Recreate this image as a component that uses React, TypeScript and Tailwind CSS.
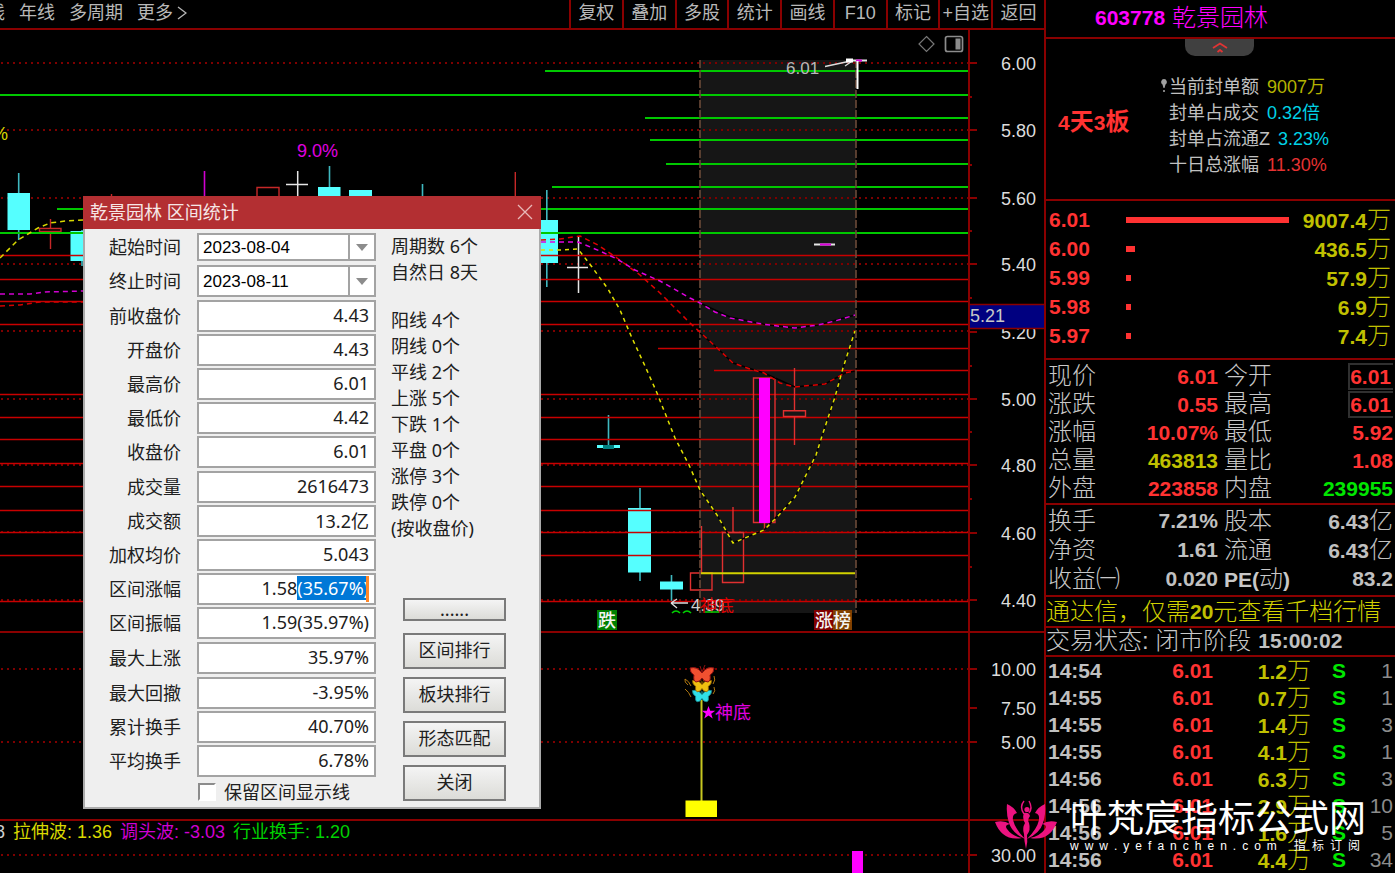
import { useEffect, useRef } from "react";
import type { ReactNode } from "react";

const LATIN_CJK = "font-['Liberation_Sans','Noto_Sans_CJK_SC',sans-serif]";
const DIALOG_FONT = "font-['Noto_Sans','Noto_Sans_CJK_SC',sans-serif]";

const tools = ["复权", "叠加", "多股", "统计", "画线", "F10", "标记", "+自选", "返回"];
const periods = ["线", "年线", "多周期", "更多"];

const dotted = [63, 130, 198, 264, 331, 399, 465, 532, 600];
const greenLines = [
  [545, 70], [0, 94], [645, 117], [650, 139], [666, 163], [552, 186], [57, 208], [0, 232],
];
const redLines = [
  [0, 255], [0, 279], [0, 301], [0, 324], [658, 348], [714, 370], [0, 394], [0, 417],
  [0, 439], [0, 463], [0, 486], [0, 510], [0, 532], [0, 555], [0, 601],
];

function Grid({ ys }: { ys: number[] }) {
  return (
    <g stroke="#7d0000" strokeWidth="2" strokeDasharray="2 4">
      {ys.map((y) => <line key={y} x1="1" x2="968" y1={y} y2={y} />)}
    </g>
  );
}

function MainChart() {
  return (
    <svg viewBox="0 30 968 601" preserveAspectRatio="xMaxYMin slice" className="block h-[601px] w-full min-w-0 flex-1" role="img" aria-label="K线图">
      <rect x="700" y="60" width="156" height="553" fill="#161616" />
      <Grid ys={dotted} />
      <g stroke="#00c800" strokeWidth="2">
        {greenLines.map(([x, y]) => <line key={y} x1={x} x2="968" y1={y + 1} y2={y + 1} />)}
      </g>

      <g fill="none" strokeWidth="1.4" stroke="#c62828">
        <path d="M257 200V187.500H279V200M515.300 172V200M111.500 194V200M39.500 228.500H61V231.500H39.500ZM50.500 219V228M50.500 232V249" />
      </g>
      <g stroke="#3fb8c0" strokeWidth="1.6">
        <path d="M18.700 173V240M82 230V266M329.500 166V190M422.500 184V200M546.800 190V287M608.500 415V446M640 488V581M671.500 575V602" />
      </g>
      <g fill="#55ffff">
        <rect x="7.500" y="193" width="22.500" height="37" />
        <rect x="70.500" y="231" width="22.500" height="30" />
        <rect x="318" y="187" width="22.500" height="20" />
        <rect x="349" y="190" width="23" height="20" />
        <rect x="535" y="220" width="23" height="43" />
        <rect x="597" y="445" width="23" height="3" />
        <rect x="628" y="508" width="23" height="64.500" />
        <rect x="660" y="581.500" width="23" height="8" />
      </g>
      <rect x="603" y="445" width="11" height="4" fill="#008080" />
      <path d="M204.500 171V200" stroke="#d000d0" strokeWidth="1.6" />
      <path d="M297.700 171V200M286 184.500H308M578.500 236V293M567 267.500H588" stroke="#e6e6e6" strokeWidth="1.5" fill="none" />

      <g stroke="#c80000" strokeWidth="1.7">
        {redLines.map(([x, y]) => <line key={y} x1={x} x2="968" y1={y + 0.5} y2={y + 0.5} />)}
      </g>
      <path d="M0 233H968" stroke="#00c800" strokeWidth="2" />

      <g fill="none" stroke="#e03030" strokeWidth="1.4">
        <path d="M690.500 573H712V590H690.500ZM701.500 526V573M722.500 532.500H743.500V582.500H722.500ZM733 507V532" />
        <path d="M753.500 378H775V522.500H753.500ZM764.500 522V531M783.500 410.700H805.500V416.500H783.500ZM794.500 368V410M794.500 417V445" />
      </g>
      <rect x="759" y="378" width="11" height="145" fill="#ff00ff" />
      <path d="M701 573.300H855" stroke="#d2d200" strokeWidth="2" />
      <path d="M700 60V613M856 60V613" stroke="#6b4a38" strokeWidth="1.6" strokeDasharray="8 2" />

      <g fill="none" strokeWidth="1.5">
        <path d="M700 303L730 317 765 324.500 795 328 818 325 855 315M700 333L715 346 733 363 764 373 795 387 825 384 845 373 855 371M700 490L717 515 733 543 764 530 795 497 816 455 823 433 835 397 843 368 855 331" stroke="#000" />
        <path d="M0 258L18 240 38 228 50 223 65 221 83 220" stroke="#d8d800" strokeDasharray="5 4" />
        <path d="M0 294H30L45 292 83 291" stroke="#d000d0" strokeDasharray="5 4" />
        <path d="M0 306L20 305 40 302H83" stroke="#d00000" strokeDasharray="5 4" />
        <path d="M541 240L560 239 580 236 598 245 617 258 640 275 660 293 690 323 715 346 733 363 750 369 764 373 780 383 795 387 825 384 845 373 855 371" stroke="#e00000" strokeDasharray="5 4" />
        <path d="M541 242H578L600 251 617 259 635 270 660 281 690 298 700 303 715 312 730 318 765 324.500 795 328 818 325 835 321 855 315" stroke="#e000e0" strokeDasharray="5 4" />
        <path d="M541 250H560L578 249 592 267 608 289 620 310 632 338 645 366 657 393 675 438 689 465 700 490 717 515 733 543 764 530 778 516 795 497 816 455 823 433 835 397 843 368 855 331" stroke="#e0e000" strokeDasharray="4 4" />
      </g>

      <g strokeWidth="2" fill="none">
        <path d="M814 244.500H835M850 60.500H867" stroke="#e6e6e6" />
        <path d="M820 244.500H831M856 60.500H862" stroke="#e000e0" />
        <path d="M857.500 61V89" stroke="#fff" />
        <path d="M825 66.500L853 60.500M845 66L853 60.500M671 603H688M671 603L677 599M671 603L677 608" stroke="#ddd" strokeWidth="1.3" />
        <path d="M846 60.500H853" stroke="#fff" strokeWidth="4" />
      </g>

      <g className={LATIN_CJK} fontSize="18">
        <text x="-8" y="140" fill="#d8d800">%</text>
        <text x="297" y="157" fill="#e000e0">9.0%</text>
        <text x="786" y="74" fill="#b8b8b8" fontSize="17">6.01</text>
        <text x="691" y="611" fill="#d0d0d0" fontSize="17">4.39</text>
        <text x="700" y="612" fill="#ff0000" fontSize="17" opacity="0.85">神底</text>
      </g>
      <rect x="672" y="613" width="70" height="6" fill="#000" />
      <path d="M672 613q4-4 8 0M683 613q4-4 8 0M705 612h14" stroke="#00d000" strokeWidth="1.6" fill="none" />

      <rect x="597" y="610" width="20" height="20" fill="#008000" />
      <rect x="814" y="610" width="19" height="20" fill="#800000" />
      <rect x="833" y="610" width="19" height="20" fill="#804000" />
      <g className={LATIN_CJK} fontSize="18" fontWeight="500" fill="#f4f4f4">
        <text x="598" y="627">跌</text>
        <text x="815" y="627">涨榜</text>
      </g>

      <path d="M926.500 36.500L934 44 926.500 51.500 919 44Z" fill="none" stroke="#777" strokeWidth="1.2" />
      <rect x="945.500" y="36.500" width="17" height="15" rx="2" fill="none" stroke="#8c8c8c" strokeWidth="1.7" />
      <rect x="955.500" y="38.500" width="5" height="11" fill="#8c8c8c" />
    </svg>
  );
}

function Butterfly({ y, size, fill, edge }: { y: number; size: number; fill: string; edge: string }) {
  return (
    <path
      transform={`translate(702 ${y}) scale(${size})`}
      d="M0-3Q-5-10-12-8Q-12-3-8-1Q-9 5-6 6Q-2 6 0 2Q2 6 6 6Q9 5 8-1Q12-3 12-8Q5-10 0-3ZM0-4L3-11M0-4L-2-10"
      fill={fill}
      stroke={edge}
      strokeWidth="1"
    />
  );
}

function SubChart() {
  return (
    <svg viewBox="0 633 968 186" preserveAspectRatio="xMaxYMin slice" className="block h-[186px] w-full min-w-0 flex-1" role="img" aria-label="神底指标">
      <Grid ys={[669, 742]} />
      <path d="M701.500 700V802" stroke="#c8c820" strokeWidth="2" />
      <rect x="685.500" y="800.500" width="31.500" height="16.500" fill="#ffff00" />
      <Butterfly y={697} size={0.8} fill="#30e0e8" edge="#18888c" />
      <Butterfly y={687} size={0.8} fill="#f0c010" edge="#8a5a00" />
      <path d="M691 686q-2-5-6-7q-1 3 3 6M713 684q3-4 1-8M691 697q-2-5-6-8M713 694q3-3 1-7" fill="none" stroke="#b07810" strokeWidth="1" />
      <Butterfly y={676} size={1} fill="#f05030" edge="#901010" />
      <path d="M708.500 706l1.700 4.700h5l-4 3 1.500 4.800-4.200-2.900-4.200 2.900 1.500-4.800-4-3h5z" fill="#ff00ff" />
      <text x="715" y="719" fontSize="18" fill="#e000e0" className={LATIN_CJK}>神底</text>
    </svg>
  );
}

function Axis({ top, height, labels, minors, className, children }: {
  top: number; height: number; labels: [number, string][]; minors: number[]; className: string; children?: ReactNode;
}) {
  return (
    <svg viewBox={`970 ${top} 74 ${height}`} className={`block w-[76px] shrink-0 border-l-2 border-[#8a0000] ${className}`}>
      {labels.map(([y, text]) => (
        <g key={text}>
          <path d={`M970 ${y}H977`} stroke="#8a0000" strokeWidth="2" />
          <text x="1036" y={y + 7} textAnchor="end" fontSize="18" fill="#dcdcdc" className={LATIN_CJK}>{text}</text>
        </g>
      ))}
      {minors.map((y) => <path key={y} d={`M970 ${y}H972`} stroke="#8a0000" strokeWidth="2" />)}
      {children}
    </svg>
  );
}

const priceLabels: [number, string][] = [
  [63, "6.00"], [130, "5.80"], [198, "5.60"], [264, "5.40"], [332, "5.20"], [399, "5.00"],
  [465, "4.80"], [533, "4.60"], [600, "4.40"],
];

const depth = [
  { price: "6.01", w: 163, vol: "9007.4" },
  { price: "6.00", w: 9, vol: "436.5" },
  { price: "5.99", w: 5, vol: "57.9" },
  { price: "5.98", w: 5, vol: "6.9" },
  { price: "5.97", w: 5, vol: "7.4" },
];

const red = "text-[#ff3232]";
const grey = "text-[#c0c0c0]";
const quotes = [
  ["现价", "6.01", red, "今开", "6.01", red, "box"],
  ["涨跌", "0.55", red, "最高", "6.01", red, "box"],
  ["涨幅", "10.07%", red, "最低", "5.92", red, ""],
  ["总量", "463813", "text-[#c0c000]", "量比", "1.08", red, ""],
  ["外盘", "223858", red, "内盘", "239955", "text-[#00e600]", ""],
];
const basics = [
  ["换手", "7.21%", grey, "股本", "6.43亿", grey, ""],
  ["净资", "1.61", grey, "流通", "6.43亿", grey, ""],
  ["收益㈠", "0.020", grey, "PE(动)", "83.2", grey, ""],
];

const ticks = [
  ["14:54", "1.2", "1"], ["14:55", "0.7", "1"], ["14:55", "1.4", "3"], ["14:55", "4.1", "1"],
  ["14:56", "6.3", "3"], ["14:56", "2.9", "10"], ["14:56", "1.6", "5"], ["14:56", "4.4", "34"],
];

/* Bold figures followed by a unit in the lighter, larger CJK face. */
function Figure({ text }: { text: string }) {
  const unit = /[万亿]$/.test(text) ? text.slice(-1) : "";
  return (
    <>
      <span className="font-bold">{unit ? text.slice(0, -1) : text}</span>
      {unit && <span className="text-[24px] font-light">{unit}</span>}
    </>
  );
}

function QuoteTable({ rows, rowClass }: { rows: string[][]; rowClass: string }) {
  return (
    <table className="w-full table-fixed border-collapse text-[21px] leading-none">
      <colgroup>
        <col className="w-[80px]" />
        <col className="w-[90px]" />
        <col className="w-[72px]" />
        <col />
      </colgroup>
      <tbody>
        {rows.map((r) => (
          <tr key={r[0]} className={rowClass}>
            <th scope="row" className="whitespace-nowrap p-0 text-left text-[24px] font-light text-[#c8c8c8]">{r[0]}</th>
            <td className={`whitespace-nowrap p-0 text-right ${r[2]}`}><Figure text={r[1]} /></td>
            <th scope="row" className="whitespace-nowrap p-0 pl-[6px] text-left text-[24px] font-light text-[#c8c8c8]">
              {r[3].startsWith("PE")
                ? <><span className="text-[21px] font-bold">PE(</span>动<span className="text-[21px] font-bold">)</span></>
                : r[3]}
            </th>
            <td className={`whitespace-nowrap p-0 text-right ${r[5]}`}>
              {r[6] ? <span className="inline-block border-2 border-r-0 border-[#303030] py-[1px] pr-[2px]"><Figure text={r[4]} /></span> : <Figure text={r[4]} />}
            </td>
          </tr>
        ))}
      </tbody>
    </table>
  );
}

function QuotePanel() {
  return (
    <aside className="h-[873px] w-[351px] shrink-0 overflow-hidden border-l-2 border-[#8a0000]">
      <h1 className="flex h-[39px] items-center gap-[7px] border-b-2 border-[#8a0000] pb-[2px] pl-[49px] text-[#ff00ff]">
        <span className="text-[21px] font-bold">603778</span>
        <span className="text-[24px] font-light">乾景园林</span>
      </h1>
      <section className="h-[162px] border-b-2 border-[#8a0000]">
        <button aria-label="收起" className="ml-[139px] flex h-[17px] w-[69px] items-center justify-center rounded-b-[10px] bg-[#404040]">
          <svg width="16" height="12" viewBox="0 0 16 12" fill="none" stroke="#e03434" strokeWidth="1.8">
            <path d="M1 6L8 1.500 15 6M5.500 10L8 8 10.500 10" />
          </svg>
        </button>
        <div className="flex items-center pl-[12px] pt-[18px]">
          <strong className={`w-[103px] pb-[8px] text-[24px] font-bold leading-none ${red}`}><span className="text-[21px]">4</span>天<span className="text-[21px]">3</span>板</strong>
          <svg width="6" height="15" viewBox="0 0 6 15" className="mb-[80px] mr-[2px]" fill="#a0a0a0">
            <path d="M3 0a3 3 0 0 1 1.500 5.500L3.500 9h-1L1.500 5.500A3 3 0 0 1 3 0zM2.200 11h1.600v2H2.200z" />
          </svg>
          <dl className="text-[18px] leading-[26px] text-[#c0c0c0]">
            <div className="flex gap-[8px]"><dt>当前封单额</dt><dd className="text-[#b4b400]">9007万</dd></div>
            <div className="flex gap-[8px]"><dt>封单占成交</dt><dd className="text-[#00d2e6]">0.32倍</dd></div>
            <div className="flex gap-[8px]"><dt>封单占流通Z</dt><dd className="text-[#00d2e6]">3.23%</dd></div>
            <div className="flex gap-[8px]"><dt>十日总涨幅</dt><dd className="text-[#e63232]">11.30%</dd></div>
          </dl>
        </div>
      </section>
      <table className="block border-b-2 border-[#8a0000] pb-[8px] pt-[4px] text-[21px] leading-none">
        <tbody className="block">
          {depth.map((d) => (
            <tr key={d.price} className="flex h-[29px] items-center pl-[3px] pr-[4px]">
              <td className={`w-[77px] font-bold ${red}`}>{d.price}</td>
              <td className="flex-1"><div className="h-[6px] bg-[#ff3232]" style={{ width: d.w }} /></td>
              <td className="whitespace-nowrap text-[#c0c000]"><Figure text={d.vol + "万"} /></td>
            </tr>
          ))}
        </tbody>
      </table>
      <div className="border-b-2 border-[#8a0000] pb-px pl-[2px] pr-[2px] pt-[2px]">
        <QuoteTable rows={quotes} rowClass="h-[28px]" />
      </div>
      <div className="border-b-2 border-[#8a0000] pb-[2px] pl-[2px] pr-[2px] pt-px">
        <QuoteTable rows={basics} rowClass="h-[29px]" />
      </div>
      <p className="flex h-[31px] items-center overflow-hidden whitespace-nowrap border-b-2 border-[#8a0000] text-[24px] font-light leading-none text-[#d0d000]">
        通达信，仅需<span className="text-[21px] font-bold text-[#c0c000]">20</span>元查看千档行情
      </p>
      <p className="flex h-[29px] items-center whitespace-nowrap border-b-2 border-[#8a0000] pb-[2px] text-[24px] font-light leading-none text-[#c8c8c8]">
        交易状态: 闭市阶段<span className="pl-[7px] text-[21px] font-bold text-[#c0c0c0]">15:00:02</span>
      </p>
      <table className="w-full table-fixed border-collapse text-[21px] font-bold leading-none">
        <colgroup>
          <col className="w-[82px]" />
          <col className="w-[85px]" />
          <col className="w-[98px]" />
          <col className="w-[35px]" />
          <col />
        </colgroup>
        <tbody>
          {ticks.map(([time, vol, n], i) => (
            <tr key={i} className="h-[27px]">
              <td className={`p-0 pl-[2px] ${grey}`}>{time}</td>
              <td className={`p-0 text-right ${red}`}>6.01</td>
              <td className="whitespace-nowrap p-0 text-right text-[#c0c000]"><Figure text={vol + "万"} /></td>
              <td className="p-0 text-right text-[#00e600]">S</td>
              <td className="p-0 pr-[2px] text-right font-medium text-[#8c8c8c]">{n}</td>
            </tr>
          ))}
        </tbody>
      </table>
    </aside>
  );
}

const fieldGroups: [string, string][][] = [
  [["前收盘价", "4.43"], ["开盘价", "4.43"], ["最高价", "6.01"], ["最低价", "4.42"], ["收盘价", "6.01"]],
  [["成交量", "2616473"], ["成交额", "13.2亿"], ["加权均价", "5.043"], ["区间涨幅", "1.58(35.67%)"], ["区间振幅", "1.59(35.97%)"]],
  [["最大上涨", "35.97%"]],
  [["最大回撤", "-3.95%"], ["累计换手", "40.70%"], ["平均换手", "6.78%"]],
];

const inputClass = "w-[179px] border-2 border-[#a3a3a3] bg-white pb-[2px] pr-[5px] text-right text-[18px] leading-none text-[#202020] outline-none selection:bg-[#0078d7] selection:text-white";

function DateField({ id, label, value, height }: { id: string; label: string; value: string; height: string }) {
  return (
    <div className="flex items-center justify-end gap-[16px]">
      <label htmlFor={id}>{label}</label>
      <div className={`relative w-[179px] ${height}`}>
        <select id={id} className="h-full w-full appearance-none border-2 border-[#a3a3a3] bg-white pl-[4px] font-['Liberation_Sans',sans-serif] text-[17px] leading-none text-black">
          <option>{value}</option>
        </select>
        <span className="pointer-events-none absolute inset-y-0 right-[2px] flex w-[26px] items-center justify-center border-l-2 border-[#a3a3a3]">
          <svg width="12" height="7" viewBox="0 0 12 7" fill="#8c8c8c"><path d="M0 0H12L6 7Z" /></svg>
        </span>
      </div>
    </div>
  );
}

function DialogButton({ children, className }: { children: ReactNode; className: string }) {
  return (
    <button className={`w-[103px] border-2 border-[#7a7a7a] bg-linear-to-b from-[#f4f4f4] to-[#dcdcd8] pb-[2px] leading-none ${className}`}>
      {children}
    </button>
  );
}

function StatsDialog() {
  const selected = useRef<HTMLInputElement>(null);
  useEffect(() => {
    selected.current?.focus({ preventScroll: true });
    selected.current?.setSelectionRange(4, 12);
  }, []);

  return (
    <div role="dialog" aria-label="区间统计" className={`absolute left-[83px] top-[196px] w-[458px] border-2 border-t-0 border-[#aaaaaa] bg-[#efefef] text-[18px] leading-none text-[#202020] ${DIALOG_FONT}`}>
      <header className="-mx-[2px] flex h-[33px] items-center justify-between bg-[#b32f32] pb-[2px] pl-[7px] pr-[8px] text-[#f6e6e6]">
        <h2>乾景园林 区间统计</h2>
        <button aria-label="关闭窗口">
          <svg width="16" height="16" viewBox="0 0 16 16" stroke="#e8b8b8" strokeWidth="1.3"><path d="M1 1L15 15M15 1L1 15" /></svg>
        </button>
      </header>
      <div className="flex gap-[15px] pb-[6px] pl-[6px] pt-[4px]">
        <form className="w-[285px]">
          <div className="mb-[3px] flex flex-col gap-[4px]">
            <DateField id="from" label="起始时间" value="2023-08-04" height="h-[28px]" />
            <DateField id="to" label="终止时间" value="2023-08-11" height="h-[32px]" />
          </div>
          <div className="flex flex-col gap-[3px]">
            {fieldGroups.map((group, g) => (
              <div key={g} className="flex flex-col gap-[2px]">
                {group.map(([label, value]) => (
                  <div key={label} className="flex items-center justify-end gap-[16px]">
                    <label htmlFor={label}>{label}</label>
                    <div className="relative">
                      <input id={label} ref={label === "区间涨幅" ? selected : undefined} defaultValue={value} className={`h-[32px] ${inputClass}`} />
                      {label === "区间涨幅" && <span className="absolute right-[7px] top-[3px] h-[26px] w-[3px] bg-[#ff8728]" />}
                    </div>
                  </div>
                ))}
              </div>
            ))}
          </div>
          <label className="flex items-center gap-[8px] pl-[107px] pt-[6px]">
            <input type="checkbox" className="h-[18px] w-[18px] appearance-none border-2 border-[#8c8c8c] border-b-white border-r-white bg-white" />
            保留区间显示线
          </label>
        </form>
        <div className="flex flex-1 flex-col justify-between">
          <div className="leading-[26px]">
            <p>周期数 6个</p>
            <p>自然日 8天</p>
            <div className="pt-[22px]">
              {["阳线 4个", "阴线 0个", "平线 2个", "上涨 5个", "下跌 1个", "平盘 0个", "涨停 3个", "跌停 0个", "(按收盘价)"].map((t) => <p key={t}>{t}</p>)}
            </div>
          </div>
          <div className="flex flex-col gap-[8px] pl-[12px]">
            <DialogButton className="mb-[4px] h-[23px]">......</DialogButton>
            <DialogButton className="h-[36px]">区间排行</DialogButton>
            <DialogButton className="h-[36px]">板块排行</DialogButton>
            <DialogButton className="h-[36px]">形态匹配</DialogButton>
            <DialogButton className="h-[36px]">关闭</DialogButton>
          </div>
        </div>
      </div>
    </div>
  );
}

function LotusHalf() {
  return (
    <>
      <path d="M17 8Q24 11 27 17Q22 18 23 24Q25 33 35 43Q22 37 19 27Q16 18 17 8Z" />
      <path d="M5 26Q14 24 20 28Q14 29 17 33Q22 40 32 42Q20 44 13 38Q8 34 5 26Z" />
    </>
  );
}

function Watermark() {
  return (
    <div className="pointer-events-none absolute left-[990px] top-[796px] flex items-start gap-[8px] text-white">
      <svg width="72" height="60" viewBox="0 0 72 60" fill="#ec1380">
        <LotusHalf />
        <g transform="translate(72 0) scale(-1 1)"><LotusHalf /></g>
        <circle cx="37" cy="13.500" r="2.600" />
        <path d="M34 17Q39 16 40 20Q37 24 39 27Q41 34 37 39Q38 46 36 53Q34 45 34 38Q32 32 35 27Q32 22 34 17Z" />
        <path d="M34 18Q29 11 34 5M39 17Q43 12 39 5" fill="none" stroke="#ec1380" strokeWidth="1.400" />
      </svg>
      <div className="flex flex-col gap-[3px]">
        <p className="whitespace-nowrap font-['Noto_Sans_CJK_SC',sans-serif] text-[37px] leading-[41px]">叶梵宸指标公式网</p>
        <p className="flex gap-[17px] text-[12px] leading-[12px]">
          <span className="flex gap-[6px]">{[..."www.yefanchen.com"].map((c, i) => <span key={i}>{c}</span>)}</span>
          <span className="flex gap-[6px]">{[..."指标订阅"].map((c) => <span key={c}>{c}</span>)}</span>
        </p>
      </div>
    </div>
  );
}

export default function App() {
  return (
    <div className={`relative flex overflow-hidden bg-black ${LATIN_CJK}`}>
      <main className="flex h-[873px] min-w-0 flex-1 flex-col">
        <div className="flex h-[30px] shrink-0 justify-between border-b-2 border-[#8a0000] text-[18px] leading-none text-[#b8b8b8]">
          <nav className="-ml-[13px] flex items-center gap-[14px] pb-[2px]">
            {periods.map((p) => <button key={p}>{p}</button>)}
            <svg width="10" height="14" viewBox="0 0 10 14" className="-ml-[10px]" fill="none" stroke="#b8b8b8" strokeWidth="1.300"><path d="M1 1L9 7 1 13" /></svg>
          </nav>
          <div className="grid w-[475px] grid-cols-9">
            {tools.map((t) => <button key={t} className="whitespace-nowrap border-l-2 border-[#8a0000] pb-[2px]">{t}</button>)}
          </div>
        </div>
        <div className="flex border-b-2 border-[#8a0000]">
          <MainChart />
          <Axis top={30} height={601} className="h-[601px]" labels={priceLabels} minors={[97, 165, 231, 298, 366, 432, 499, 567]}>
            <rect x="970" y="305" width="74" height="23" fill="#000080" />
            <path d="M970 304.500H1044M970 328.500H1044" stroke="#8a0000" strokeWidth="1.500" />
            <text x="970" y="322" fontSize="18" fill="#c8c8c8" className={LATIN_CJK}>5.21</text>
          </Axis>
        </div>
        <div className="flex border-b-2 border-[#8a0000]">
          <SubChart />
          <Axis top={633} height={186} className="h-[186px]" labels={[[669, "10.00"], [708, "7.50"], [742, "5.00"]]} minors={[]} />
        </div>
        <div className="flex h-[52px] shrink-0">
          <div className="relative min-w-0 flex-1">
            <svg viewBox="0 821 968 52" preserveAspectRatio="xMaxYMin slice" className="block h-[52px] w-full" role="img" aria-label="换手指标">
              <Grid ys={[855]} />
              <rect x="852" y="851" width="11" height="22" fill="#ff00ff" />
            </svg>
            <p className="absolute -left-[5px] top-px flex gap-[8px] whitespace-nowrap text-[18px] leading-[20px]">
              <span className="text-[#d0d0d0]">8</span>
              <span className="text-[#d8d800]">拉伸波: 1.36</span>
              <span className="text-[#d000d0]">调头波: -3.03</span>
              <span className="text-[#00d000]">行业换手: 1.20</span>
            </p>
          </div>
          <Axis top={821} height={52} className="h-[52px]" labels={[[855, "30.00"]]} minors={[]} />
        </div>
      </main>
      <QuotePanel />
      <StatsDialog />
      <Watermark />
    </div>
  );
}
